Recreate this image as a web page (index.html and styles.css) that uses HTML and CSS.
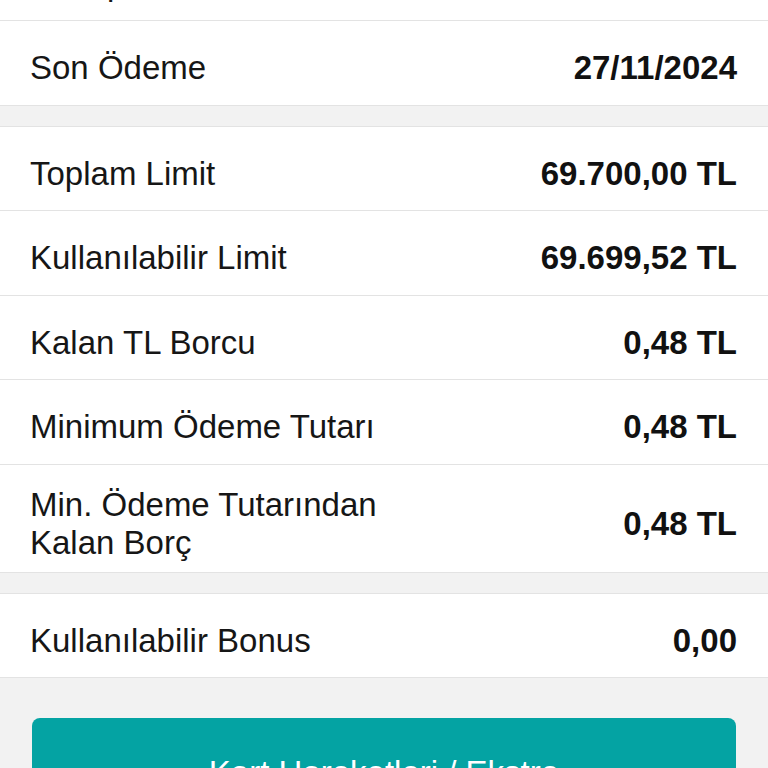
FILE: index.html
```html
<!DOCTYPE html>
<html lang="tr">
<head>
    <meta charset="UTF-8">
    <meta name="viewport" content="width=device-width, initial-scale=1.0">
    <title>Kart Detayı</title>
    <link rel="stylesheet" href="styles.css">
</head>
<body>
    <div class="card-detail">
        <div class="section section-first">
            <div class="row">
                <span class="label">Hesap Kesim Tarihi</span>
                <span class="value">15/11/2024</span>
            </div>
            <div class="row">
                <span class="label">Son Ödeme</span>
                <span class="value">27/11/2024</span>
            </div>
        </div>

        <div class="section">
            <div class="row">
                <span class="label">Toplam Limit</span>
                <span class="value">69.700,00 TL</span>
            </div>
            <div class="row">
                <span class="label">Kullanılabilir Limit</span>
                <span class="value">69.699,52 TL</span>
            </div>
            <div class="row">
                <span class="label">Kalan TL Borcu</span>
                <span class="value">0,48 TL</span>
            </div>
            <div class="row">
                <span class="label">Minimum Ödeme Tutarı</span>
                <span class="value">0,48 TL</span>
            </div>
            <div class="row">
                <span class="label">Min. Ödeme Tutarından<br>Kalan Borç</span>
                <span class="value">0,48 TL</span>
            </div>
        </div>

        <div class="section">
            <div class="row">
                <span class="label">Kullanılabilir Bonus</span>
                <span class="value">0,00</span>
            </div>
        </div>

        <div class="actions">
            <button class="primary-btn" type="button">Kart Hareketleri / Ekstre</button>
        </div>
    </div>
</body>
</html>
```

FILE: styles.css
```css
body {
    margin: 0;
    font-family: "Liberation Sans", Arial, sans-serif;
    background-color: #f2f2f2;
    overflow: hidden;
}

.card-detail {
    margin-top: -64.5px;
}

.section {
    background: white;
    border-top: 1px solid #e3e3e3;
    margin-bottom: 20px;
}

.row {
    display: flex;
    justify-content: space-between;
    align-items: center;
    min-height: 52.5px;
    padding: 21px 31px 10px 30px;
    border-bottom: 1px solid #e3e3e3;
    font-size: 33px;
    line-height: 38px;
}

.label {
    color: #161616;
}

.value {
    color: #111;
    font-weight: bold;
    white-space: nowrap;
}

.actions {
    padding: 20px 32px 0;
}

.primary-btn {
    display: block;
    width: 100%;
    padding: 36px 0;
    font-family: inherit;
    font-size: 33px;
    line-height: 38px;
    color: white;
    background-color: #04a3a3;
    border: none;
    border-radius: 8px;
    cursor: pointer;
}
```
